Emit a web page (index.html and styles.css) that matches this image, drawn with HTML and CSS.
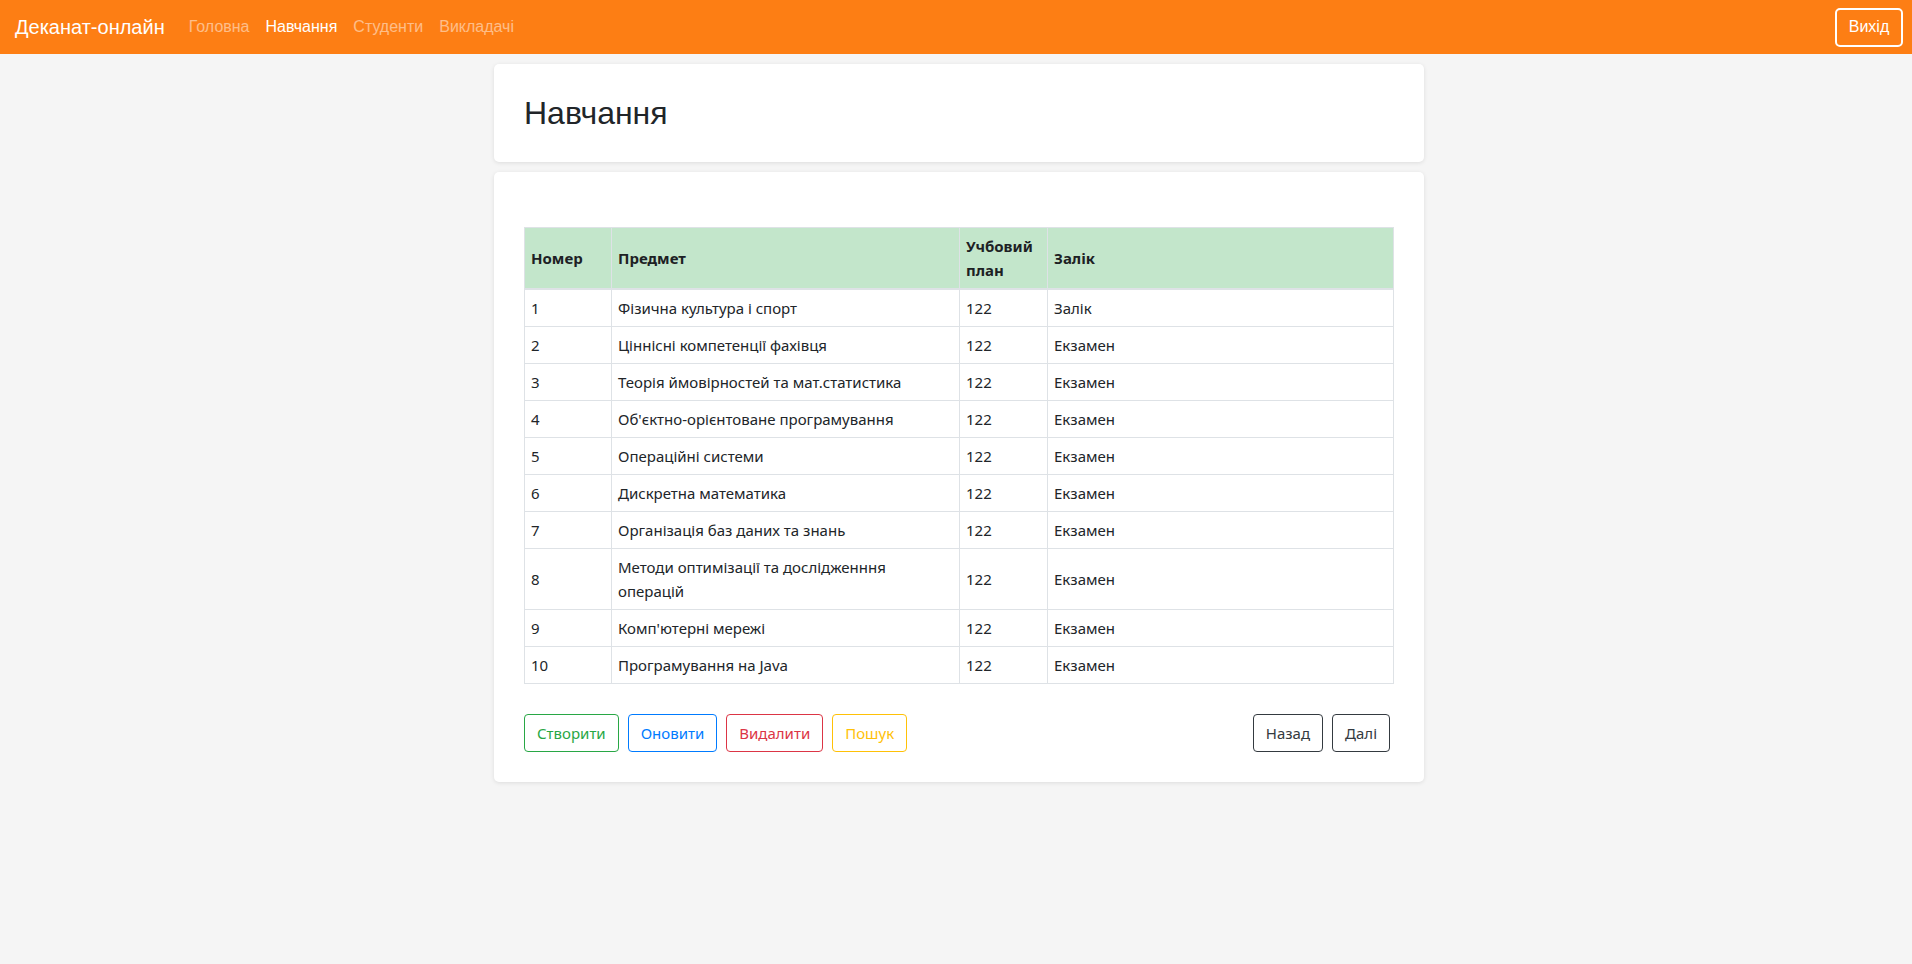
FILE: index.html
```html
<!DOCTYPE html>
<html lang="uk">
<head>
<meta charset="utf-8">
<title>Деканат-онлайн</title>
<link rel="stylesheet" href="styles.css">
</head>
<body>
<nav class="navbar">
  <a class="brand" href="#">Деканат-онлайн</a>
  <ul class="nav-links">
    <li><a class="nav-link" href="#">Головна</a></li>
    <li><a class="nav-link active" href="#">Навчання</a></li>
    <li><a class="nav-link" href="#">Студенти</a></li>
    <li><a class="nav-link" href="#">Викладачі</a></li>
  </ul>
  <button class="logout">Вихід</button>
</nav>
<main class="page">
  <section class="card card-head">
    <h1 class="page-title">Навчання</h1>
  </section>
  <section class="card card-main">
    <table class="grid">
      <colgroup>
        <col class="c-num"><col class="c-subj"><col class="c-plan"><col class="c-test">
      </colgroup>
      <thead>
        <tr><th>Номер</th><th>Предмет</th><th>Учбовий план</th><th>Залік</th></tr>
      </thead>
      <tbody>
        <tr><td>1</td><td>Фізична культура і спорт</td><td>122</td><td>Залік</td></tr>
        <tr><td>2</td><td>Ціннісні компетенції фахівця</td><td>122</td><td>Екзамен</td></tr>
        <tr><td>3</td><td>Теорія ймовірностей та мат.статистика</td><td>122</td><td>Екзамен</td></tr>
        <tr><td>4</td><td>Об'єктно-орієнтоване програмування</td><td>122</td><td>Екзамен</td></tr>
        <tr><td>5</td><td>Операційні системи</td><td>122</td><td>Екзамен</td></tr>
        <tr><td>6</td><td>Дискретна математика</td><td>122</td><td>Екзамен</td></tr>
        <tr><td>7</td><td>Організація баз даних та знань</td><td>122</td><td>Екзамен</td></tr>
        <tr><td>8</td><td>Методи оптимізації та дослідженння операцій</td><td>122</td><td>Екзамен</td></tr>
        <tr><td>9</td><td>Комп'ютерні мережі</td><td>122</td><td>Екзамен</td></tr>
        <tr><td>10</td><td>Програмування на Java</td><td>122</td><td>Екзамен</td></tr>
      </tbody>
    </table>
    <div class="actions">
      <div class="btn-group">
        <button class="btn btn-success">Створити</button>
        <button class="btn btn-primary">Оновити</button>
        <button class="btn btn-danger">Видалити</button>
        <button class="btn btn-warning">Пошук</button>
      </div>
      <div class="btn-group pager">
        <button class="btn btn-dark">Назад</button>
        <button class="btn btn-dark">Далі</button>
      </div>
    </div>
  </section>
</main>
</body>
</html>
```

FILE: styles.css
```css
* { box-sizing: border-box; }

html, body {
  margin: 0;
  padding: 0;
}

body {
  background: #f5f5f5;
  color: #212529;
  font-family: "Noto Sans", "Open Sans", sans-serif;
  font-size: 15px;
  min-height: 964px;
}

/* Navbar */
.navbar {
  height: 54px;
  background: #fd7e14;
  display: flex;
  align-items: center;
  padding: 0 9px 0 15px;
  font-family: "Liberation Sans", Arial, sans-serif;
}

.brand {
  color: #fff;
  text-decoration: none;
  font-size: 20px;
  margin-right: 16px;
}

.nav-links {
  list-style: none;
  display: flex;
  margin: 0;
  padding: 0;
  flex: 1;
}

.nav-link {
  display: block;
  padding: 8px 8px;
  font-size: 16px;
  color: rgba(255, 255, 255, 0.5);
  text-decoration: none;
}

.nav-link.active {
  color: #fff;
}

.logout {
  font-family: "Liberation Sans", Arial, sans-serif;
  font-size: 16px;
  color: #fff;
  background: transparent;
  border: 2px solid #fff;
  border-radius: 5px;
  height: 39px;
  width: 68px;
  padding: 0;
}

/* Page */
.page {
  width: 930px;
  margin: 0 auto;
  padding: 10px 0 0 6px;
  box-sizing: content-box;
  display: flex;
  flex-direction: column;
  gap: 10px;
}

.card {
  background: #fff;
  border-radius: 5px;
  box-shadow: 0 1px 4px rgba(0, 0, 0, 0.1);
  padding: 30px;
}

.page-title {
  margin: 0;
  font-family: "Liberation Sans", Arial, sans-serif;
  font-weight: 400;
  font-size: 32px;
  line-height: 38px;
  color: #212529;
}

.card-main {
  padding-top: 55px;
}

/* Table */
.grid {
  width: 100%;
  table-layout: fixed;
  border-collapse: collapse;
  line-height: 24px;
}

.c-num { width: 87px; }
.c-subj { width: 348px; }
.c-plan { width: 88px; }

.grid th,
.grid td {
  border: 1px solid #dee2e6;
  padding: 6px 6px;
  text-align: left;
  vertical-align: middle;
}

.grid thead th {
  background: #c3e6cb;
  font-weight: 700;
  border-bottom-width: 2px;
  color: #1d2124;
}

/* Actions */
.actions {
  display: flex;
  justify-content: space-between;
  margin-top: 30px;
}

.btn-group {
  display: flex;
  gap: 9px;
}

.pager {
  margin-right: 4px;
}

.btn {
  font-family: "Noto Sans", "Open Sans", sans-serif;
  font-size: 15px;
  line-height: 24px;
  padding: 6px 12px;
  background: #fff;
  border: 1px solid;
  border-radius: 4px;
}

.btn-success { color: #28a745; border-color: #28a745; }
.btn-primary { color: #007bff; border-color: #007bff; }
.btn-danger { color: #dc3545; border-color: #dc3545; }
.btn-warning { color: #ffc107; border-color: #ffc107; }
.btn-dark { color: #343a40; border-color: #343a40; }
```
